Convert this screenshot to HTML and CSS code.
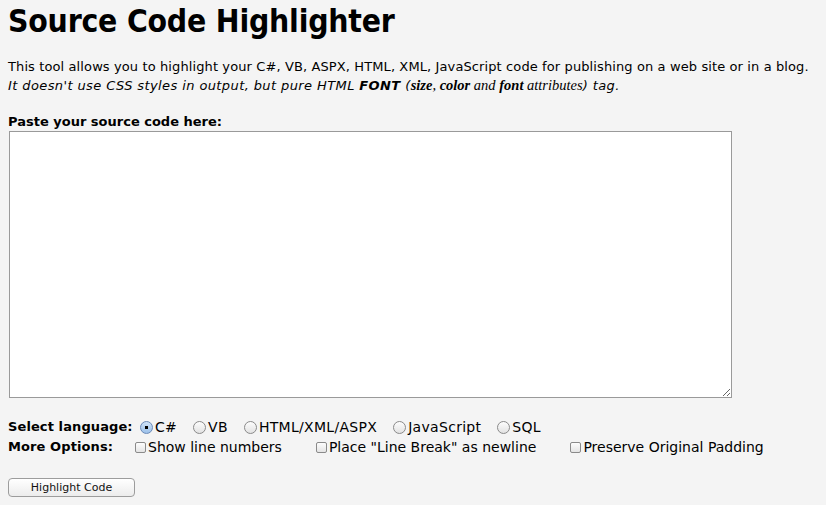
FILE: index.html
```html
<!DOCTYPE html>
<html>
<head>
<meta charset="utf-8">
<link rel="stylesheet" href="styles.css">
</head>
<body>
<h1 class="title">Source Code Highlighter</h1>
<p class="intro">This tool allows you to highlight your C#, VB, ASPX, HTML, XML, JavaScript code for publishing on a web site or in a blog.<br>
<i class="note">It doesn't use CSS styles in output, but pure HTML <b>FONT</b> (<span class="serif"><b>size</b>, <b>color</b> and <b>font</b> attributes</span>) tag.</i></p>
<div class="label">Paste your source code here:</div>
<textarea class="code"></textarea>
<div class="opts">
  <div class="optlabel">Select language:</div>
  <div class="optrow langs">
    <label class="opt"><input type="radio" name="lang" class="radio" checked>C#</label>
    <label class="opt"><input type="radio" name="lang" class="radio">VB</label>
    <label class="opt"><input type="radio" name="lang" class="radio">HTML/XML/ASPX</label>
    <label class="opt"><input type="radio" name="lang" class="radio">JavaScript</label>
    <label class="opt"><input type="radio" name="lang" class="radio">SQL</label>
  </div>
  <div class="optlabel">More Options:</div>
  <div class="optrow checks">
    <label class="opt"><input type="checkbox" class="check">Show line numbers</label>
    <label class="opt"><input type="checkbox" class="check">Place "Line Break" as newline</label>
    <label class="opt"><input type="checkbox" class="check">Preserve Original Padding</label>
  </div>
</div>
<button class="btn">Highlight Code</button>
</body>
</html>
```
FILE: styles.css
```css
html, body { margin: 0; padding: 0; }
body {
  background: #f4f4f4;
  color: #000;
  font-family: "DejaVu Sans", sans-serif;
  font-size: 13px;
  padding: 0 8px;
}
.title {
  font-family: "DejaVu Sans Condensed", "DejaVu Sans", sans-serif;
  font-size: 31.6px;
  font-weight: bold;
  margin: 0;
  padding-top: 3px;
  line-height: 36px;
  letter-spacing: -0.2px;
}
.intro {
  margin: 19px 0 0 0;
  line-height: 18px;
  letter-spacing: 0.11px;
}
.note { letter-spacing: 0.4px; }
.serif {
  font-family: "Liberation Serif", serif;
  font-size: 14.5px;
  letter-spacing: 0;
}
.label {
  font-weight: bold;
  margin-top: 19px;
  line-height: 16px;
}
.code {
  display: block;
  box-sizing: border-box;
  width: 723px;
  height: 267px;
  margin: 1px 0 0 1px;
  border: 1px solid #9a9a9a;
  background: #fff;
  resize: both;
}
.opts {
  display: grid;
  grid-template-columns: 127px auto;
  margin-top: 19px;
  line-height: 20px;
}
.optlabel { font-weight: bold; letter-spacing: 0.1px; }
.optrow { display: flex; align-items: center; font-size: 14px; }
.opt { display: flex; align-items: center; }
.langs { letter-spacing: 0.3px; }
.langs .opt { margin-right: 16px; }
.langs .opt:first-child { margin-left: 5px; }
.checks .opt { margin-right: 34px; }
.radio {
  appearance: none;
  width: 13px;
  height: 13px;
  margin: 0 2px 0 0;
  border: 1px solid #8a8a8a;
  border-radius: 50%;
  background: linear-gradient(#fdfdfd, #e2e2e2);
  box-sizing: border-box;
}
.radio:checked {
  border-color: #6a8ab8;
  background: radial-gradient(circle, #000 0 1.6px, transparent 2px), linear-gradient(#cfe2f7, #9cc1ea);
}
.check {
  appearance: none;
  width: 11px;
  height: 11px;
  margin: 1px 2px 0 0;
  border: 1px solid #8a8a8a;
  border-radius: 2px;
  background: linear-gradient(#fdfdfd, #e4e4e4);
  box-sizing: border-box;
}
.btn {
  display: block;
  margin-top: 21px;
  width: 127px;
  height: 19px;
  font-family: "DejaVu Sans", sans-serif;
  font-size: 11px;
  color: #111;
  border: 1px solid #9c9c9c;
  border-radius: 4px;
  background: linear-gradient(#ffffff, #ececec);
  padding: 0;
}
```
